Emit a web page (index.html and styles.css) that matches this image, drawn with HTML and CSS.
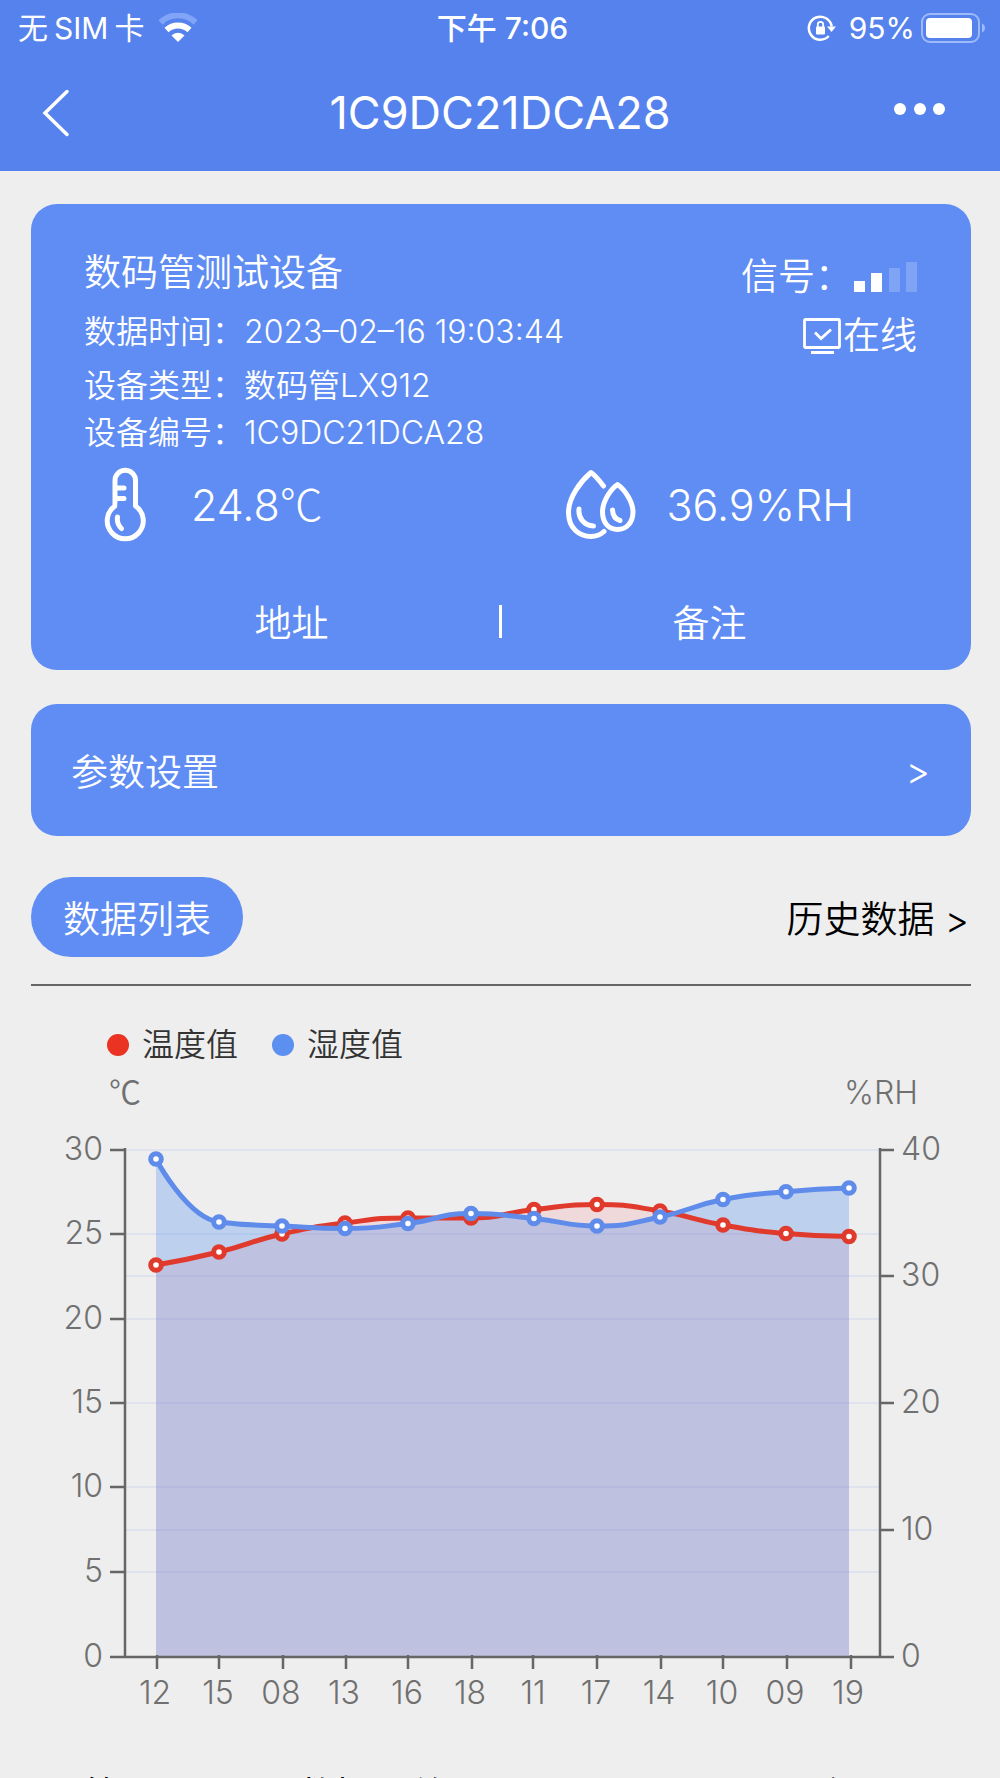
FILE: index.html
```html
<!DOCTYPE html>
<html lang="zh-CN">
<head>
<meta charset="utf-8">
<meta name="viewport" content="width=device-width, initial-scale=1">
<title>1C9DC21DCA28</title>
<link rel="stylesheet" href="styles.css">
</head>
<body>
<header class="topbar">
  <div class="status">
    <div class="status-left">
      <span class="carrier"><span>无</span><span>SIM</span><span>卡</span></span>
      <svg viewBox="0 0 40 30" width="40" height="30" aria-hidden="true">
        <path d="M2.500 9.500A25 25 0 0 1 37.500 9.500" fill="none" stroke="#7fa4f8" stroke-width="6"/>
        <path d="M8.500 17A17 17 0 0 1 31.500 17" fill="none" stroke="#fff" stroke-width="6"/>
        <path d="M13.500 22.500A9 9 0 0 1 26.500 22.500L20 29Z" fill="#fff"/>
      </svg>
    </div>
    <div class="status-time">下午 7:06</div>
    <div class="status-right">
      <svg viewBox="0 0 30 28" width="30" height="28" aria-hidden="true">
        <path d="M21.800 22A11.500 11.500 0 1 1 24.700 12.500" fill="none" stroke="#fff" stroke-width="2.500"/>
        <path d="M20 12.500H29L24.500 18Z" fill="#fff"/>
        <rect x="9" y="12.500" width="9" height="8" rx="1" fill="#fff"/>
        <path d="M10.800 13V10.500A2.700 2.700 0 0 1 16.200 10.500V13" fill="none" stroke="#fff" stroke-width="1.800"/>
      </svg>
      <span class="percent">95%</span>
      <svg viewBox="0 0 66 30" width="66" height="30" aria-hidden="true">
        <rect x="1" y="1" width="57" height="28" rx="8" fill="none" stroke="#9dbafa" stroke-width="2"/>
        <rect x="5" y="5" width="46" height="20" rx="4" fill="#fff"/>
        <path d="M61 10.500Q64 12 64 15T61 19.500Z" fill="#9dbafa"/>
      </svg>
    </div>
  </div>
  <nav class="nav">
    <button class="icon-btn" type="button" aria-label="返回">
      <svg viewBox="0 0 28 48" width="28" height="48"><path d="M25 2.500L3 24L25 45.500" fill="none" stroke="#fff" stroke-width="3.500" stroke-linecap="round"/></svg>
    </button>
    <h1>1C9DC21DCA28</h1>
    <button class="icon-btn more" type="button" aria-label="更多">
      <svg viewBox="0 0 52 14" width="52" height="14" fill="#fff"><circle cx="6" cy="7" r="6"/><circle cx="26" cy="7" r="6"/><circle cx="45" cy="7" r="6"/></svg>
    </button>
  </nav>
</header>

<main>
  <section class="card device">
    <div class="summary">
      <div>
        <h2>数码管测试设备</h2>
        <p>数据时间：2023–02–16 19:03:44</p>
        <p>设备类型：数码管LX912</p>
        <p class="last">设备编号：1C9DC21DCA28</p>
      </div>
      <div class="state">
        <div class="state-row">信号：
          <svg viewBox="0 0 63 30" width="63" height="30" fill="#fff" aria-hidden="true">
            <rect x="0" y="19" width="11" height="11"/><rect x="17" y="11" width="11" height="19"/>
            <rect x="35" y="6" width="11" height="24" opacity=".2"/><rect x="52" y="0" width="11" height="30" opacity=".2"/>
          </svg>
        </div>
        <div class="state-row">
          <svg viewBox="0 0 38 36" width="38" height="36" fill="none" stroke="#fff" stroke-width="2.800" aria-hidden="true">
            <rect x="1.500" y="1.500" width="35" height="28" rx="1"/><path d="M12 14.500L18 20.500L28 11.500M8 34.500H31"/>
          </svg>在线
        </div>
      </div>
    </div>
    <div class="readings">
      <div class="reading">
        <svg viewBox="0 0 70 76" width="70" height="76" fill="none" stroke="#fff" stroke-width="5" stroke-linecap="round" aria-hidden="true">
          <path d="M25 39V13.500A10.200 10.200 0 0 1 45.500 13.500V39A18 18 0 1 1 25 39Z" stroke-linejoin="round"/>
          <path d="M26 21H34M26 31.500H34M27.500 50Q26.500 57 31.500 61.500"/>
          <path d="M27.500 39H43" stroke="#5f8df3" stroke-linecap="butt" stroke-width="6"/>
        </svg>
        <span>24.8<span class="celsius">℃</span></span>
      </div>
      <div class="reading">
        <svg viewBox="0 0 70 76" width="70" height="76" fill="none" stroke="#fff" stroke-width="5" stroke-linecap="round" stroke-linejoin="round" aria-hidden="true">
          <path d="M37.500 19Q30 9 25 5.500C15 14 2.500 30 2.500 45.500C2.500 61 13 69.500 25 69.500Q32.500 69.500 38 64.500"/>
          <path d="M51.500 17.500C45 22 36.500 34 36.500 45C36.500 56 43 62.500 51.500 62.500C60 62.500 67 56 67 45C67 34 58 22 51.500 17.500Z"/>
          <path d="M13 42C12 51 18 58.500 27.500 59M46.500 43Q47 51.500 54 53.500"/>
        </svg>
        <span>36.9%RH</span>
      </div>
    </div>
    <div class="actions">
      <button type="button">地址</button>
      <span class="bar"></span>
      <button type="button">备注</button>
    </div>
  </section>

  <a class="card settings" href="#settings"><span>参数设置</span><span>&gt;</span></a>

  <div class="tabs">
    <button class="pill" type="button">数据列表</button>
    <a href="#history">历史数据 &gt;</a>
  </div>
</main>

<section class="chart">
  <div class="legend">
    <span class="key"><i class="dot temp"></i>温度值</span>
    <span class="key"><i class="dot hum"></i>湿度值</span>
  </div>
  <div class="units"><span class="celsius">℃</span><span>%RH</span></div>
  <svg class="plot" viewBox="0 0 1000 590" role="img" aria-label="温度值与湿度值">
    <path class="grid" d="M126 20H879M126 104H879M126 189H879M126 273H879M126 357H879M126 442H879M126 146H879M126 400H879"/>
    <path class="area-temp" d="M156 135C156 135 187 129.800 219 122S250 111.200 282 104S313 97 345 93S376 88 408 88S439 88 471 88S502 82.900 534 79.500S565 74.500 597 74.500S628 75.900 660 81S691 89.400 723 95S754 100.600 786 103.500S849 106.500 849 106.500V527H156Z"/>
    <path class="area-hum" d="M156 29C156 29 187 88 219 92S250 94.400 282 96S313 98.500 345 98.500S376 97.200 408 93.500S439 83.500 471 83.500S502 85.400 534 88.500S565 96 597 96S628 93.600 660 87S691 75.800 723 69.500S754 64.600 786 61.700S849 58 849 58V527H156Z"/>
    <path class="axis" d="M125 18V527M880 18V527M110 527H894M110 20H125M110 104H125M110 189H125M110 273H125M110 357H125M110 442H125M880 20H894M880 146H894M880 273H894M880 400H894M157 525V539M219 525V539M283 525V539M346 525V539M408 525V539M472 525V539M533 525V539M597 525V539M661 525V539M723 525V539M787 525V539M851 525V539"/>
    <g class="series temp">
      <path d="M156 135C156 135 187 129.800 219 122S250 111.200 282 104S313 97 345 93S376 88 408 88S439 88 471 88S502 82.900 534 79.500S565 74.500 597 74.500S628 75.900 660 81S691 89.400 723 95S754 100.600 786 103.500S849 106.500 849 106.500"/>
      <g><circle cx="156" cy="135" r="5.300"/><circle cx="219" cy="122" r="5.300"/><circle cx="282" cy="104" r="5.300"/><circle cx="345" cy="93" r="5.300"/><circle cx="408" cy="88" r="5.300"/><circle cx="471" cy="88" r="5.300"/><circle cx="534" cy="79.500" r="5.300"/><circle cx="597" cy="74.500" r="5.300"/><circle cx="660" cy="81" r="5.300"/><circle cx="723" cy="95" r="5.300"/><circle cx="786" cy="103.500" r="5.300"/><circle cx="849" cy="106.500" r="5.300"/></g>
    </g>
    <g class="series hum">
      <path d="M156 29C156 29 187 88 219 92S250 94.400 282 96S313 98.500 345 98.500S376 97.200 408 93.500S439 83.500 471 83.500S502 85.400 534 88.500S565 96 597 96S628 93.600 660 87S691 75.800 723 69.500S754 64.600 786 61.700S849 58 849 58"/>
      <g><circle cx="156" cy="29" r="5.300"/><circle cx="219" cy="92" r="5.300"/><circle cx="282" cy="96" r="5.300"/><circle cx="345" cy="98.500" r="5.300"/><circle cx="408" cy="93.500" r="5.300"/><circle cx="471" cy="83.500" r="5.300"/><circle cx="534" cy="88.500" r="5.300"/><circle cx="597" cy="96" r="5.300"/><circle cx="660" cy="87" r="5.300"/><circle cx="723" cy="69.500" r="5.300"/><circle cx="786" cy="61.700" r="5.300"/><circle cx="849" cy="58" r="5.300"/></g>
    </g>
    <g class="label end">
      <text x="103" y="30">30</text><text x="103" y="114">25</text><text x="103" y="199">20</text><text x="103" y="283">15</text><text x="103" y="367">10</text><text x="103" y="452">5</text><text x="103" y="537">0</text>
    </g>
    <g class="label">
      <text x="901" y="30">40</text><text x="901" y="156">30</text><text x="901" y="283">20</text><text x="901" y="410">10</text><text x="901" y="537">0</text>
    </g>
    <g class="label mid">
      <text x="155" y="574">12</text><text x="218" y="574">15</text><text x="281" y="574">08</text><text x="344" y="574">13</text><text x="407" y="574">16</text><text x="470" y="574">18</text><text x="533" y="574">11</text><text x="596" y="574">17</text><text x="659" y="574">14</text><text x="722" y="574">10</text><text x="785" y="574">09</text><text x="848" y="574">19</text>
    </g>
  </svg>
</section>

<div class="list-head"><span>等</span><span>数据　总</span><span>个</span></div>
</body>
</html>
```
FILE: styles.css
```css
* { box-sizing: border-box; }
body {
  margin: 0;
  background: #eee;
  color: #000;
  font-family: Inter, "Noto Sans CJK SC", sans-serif;
  font-weight: 350;
}
h1, h2, p { margin: 0; font-weight: inherit; }
button, a { font: inherit; color: inherit; text-decoration: none; }
button { border: 0; padding: 0; background: none; }
svg { display: block; flex: none; }
.celsius { font-family: "Noto Sans CJK SC", sans-serif; }

.topbar { background: #5582ec; color: #fff; }
.status {
  display: grid;
  grid-template-columns: 1fr auto 1fr;
  align-items: center;
  height: 56px;
  padding: 0 13px 0 18px;
  font-size: 30px;
  line-height: 40px;
  font-weight: 400;
  white-space: nowrap;
}
.status-left, .status-right { display: flex; align-items: center; }
.status-left { gap: 14px; }
.carrier { display: flex; gap: 6px; }
.status-right { justify-content: flex-end; gap: 6px; }
.percent { padding-left: 6px; }
.status-time { font-weight: 500; }
.nav {
  display: grid;
  grid-template-columns: 1fr auto 1fr;
  align-items: center;
  height: 115px;
  padding: 0 42px 2px;
}
.nav h1 { font-size: 45px; line-height: 56px; font-weight: 400; }
.icon-btn { display: flex; width: 52px; }
.icon-btn.more { justify-self: end; margin-right: 12px; padding-bottom: 8px; }

main { padding: 33px 29px 0 31px; }
.card { border-radius: 26px; background: #5f8df3; color: #fff; }
.device { padding: 42px 54px 16px 53px; }
.summary { display: flex; justify-content: space-between; font-size: 32px; line-height: 54px; }
.summary h2 { margin-bottom: 5px; font-size: 37px; }
.summary .last { line-height: 40px; }
.state { display: flex; flex-direction: column; align-items: flex-end; gap: 5px; padding-top: 4px; font-size: 37px; }
.state-row { display: flex; align-items: center; gap: 2px; }
.readings {
  display: grid;
  grid-template-columns: 23fr 17fr;
  height: 103px;
  padding-left: 6px;
}
.reading { display: flex; align-items: center; gap: 31px; font-size: 43px; line-height: 54px; font-weight: 300; white-space: nowrap; }
.reading .celsius { line-height: 1px; }
.actions {
  display: grid;
  grid-template-columns: 1fr auto 1fr;
  align-items: center;
  height: 66px;
  margin-top: 32px;
  font-size: 37px;
}
.bar { width: 3px; height: 33px; background: #fff; }
.settings {
  display: flex;
  align-items: center;
  justify-content: space-between;
  height: 132px;
  margin-top: 34px;
  padding: 0 41px 0 40px;
  font-size: 37px;
}
.tabs {
  display: flex;
  align-items: center;
  justify-content: space-between;
  margin-top: 41px;
  padding-bottom: 27px;
  border-bottom: 2px solid #666;
  font-size: 37px;
}
.tabs a { padding-right: 2px; }
.pill { height: 80px; padding: 0 32px; border-radius: 40px; background: #5f8df3; color: #fff; }

.legend { display: flex; gap: 34px; padding: 35px 107px 0; font-size: 32px; line-height: 48px; color: #333; }
.key { display: flex; align-items: center; gap: 13px; }
.dot { width: 22px; height: 22px; border-radius: 50%; }
.dot.temp { background: #ea3323; }
.dot.hum { background: #5b8ff0; }
.units { display: flex; align-items: baseline; justify-content: space-between; height: 61px; padding: 0 82px 0 109px; font-size: 32px; line-height: 48px; color: #707070; }
.units .celsius { line-height: 40px; }
.plot { width: 100%; height: auto; }
.grid { stroke: #e0e3ee; stroke-width: 2; }
.axis { fill: none; stroke: #666; stroke-width: 2.500; }
.area-temp { fill: rgba(255, 80, 85, .13); }
.area-hum { fill: rgba(75, 138, 238, .3); }
.series { fill: none; stroke-width: 5; }
.series circle { fill: #fff; }
.series.temp { stroke: #e03a2c; }
.series.hum { stroke: #5f8cea; }
.label { font-size: 32px; fill: #707070; }
.label.end { text-anchor: end; }
.label.mid { text-anchor: middle; }

.list-head { display: grid; grid-template-columns: 214px 1fr 186px; padding: 49px 0 20px 84px; font-size: 37px; line-height: 54px; font-weight: 400; }
```
